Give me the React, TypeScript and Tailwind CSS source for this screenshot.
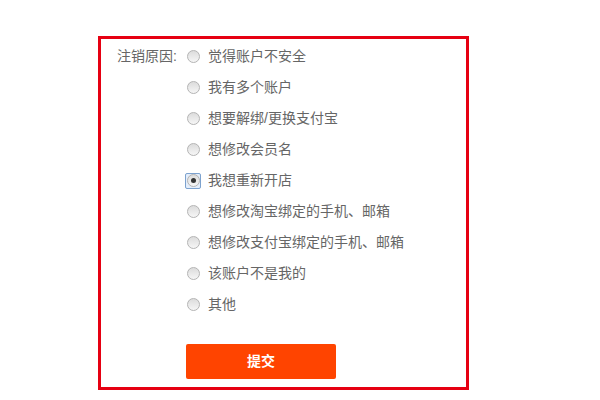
import React, { useState } from 'react';

const reasons = [
  '觉得账户不安全',
  '我有多个账户',
  '想要解绑/更换支付宝',
  '想修改会员名',
  '我想重新开店',
  '想修改淘宝绑定的手机、邮箱',
  '想修改支付宝绑定的手机、邮箱',
  '该账户不是我的',
  '其他',
];

const Radio: React.FC<{ checked: boolean }> = ({ checked }) => (
  <span
    className={`flex h-[16px] w-[16px] items-center justify-center rounded-[2px] ${
      checked ? 'border border-[#7da2ce] bg-[#e4eefb]' : 'border border-transparent'
    }`}
  >
    <span className="flex h-[13px] w-[13px] items-center justify-center rounded-full border border-[#b4b4b4] bg-gradient-to-b from-[#dcdcdc] to-[#f6f6f6]">
      {checked && <span className="h-[5px] w-[5px] rounded-full bg-[#333]" />}
    </span>
  </span>
);

export default function App() {
  const [selected, setSelected] = useState(4);

  return (
    <div
      className="h-[400px] w-[600px] bg-white pl-[98px] pt-[36px]"
      style={{ fontFamily: '"Liberation Sans", "Noto Sans CJK SC", sans-serif' }}
    >
      <div className="h-[354px] w-[371px] border-[3px] border-[#e60012] pl-[16px] pt-[2px]">
        <div className="flex">
          <div className="w-[68px] pt-[7px] text-[14px] leading-[17px] text-[#666]">注销原因:</div>
          <div className="flex flex-col">
            {reasons.map((r, i) => (
              <label
                key={r}
                onClick={() => setSelected(i)}
                className="flex h-[31px] cursor-pointer items-center gap-[7px] text-[14px] text-[#666]"
              >
                <Radio checked={selected === i} />
                <span>{r}</span>
              </label>
            ))}
            <button className="ml-[1px] mt-[24px] h-[35px] w-[150px] rounded-[2px] bg-[#ff4400] text-[14px] font-bold text-white">
              提交
            </button>
          </div>
        </div>
      </div>
    </div>
  );
}
